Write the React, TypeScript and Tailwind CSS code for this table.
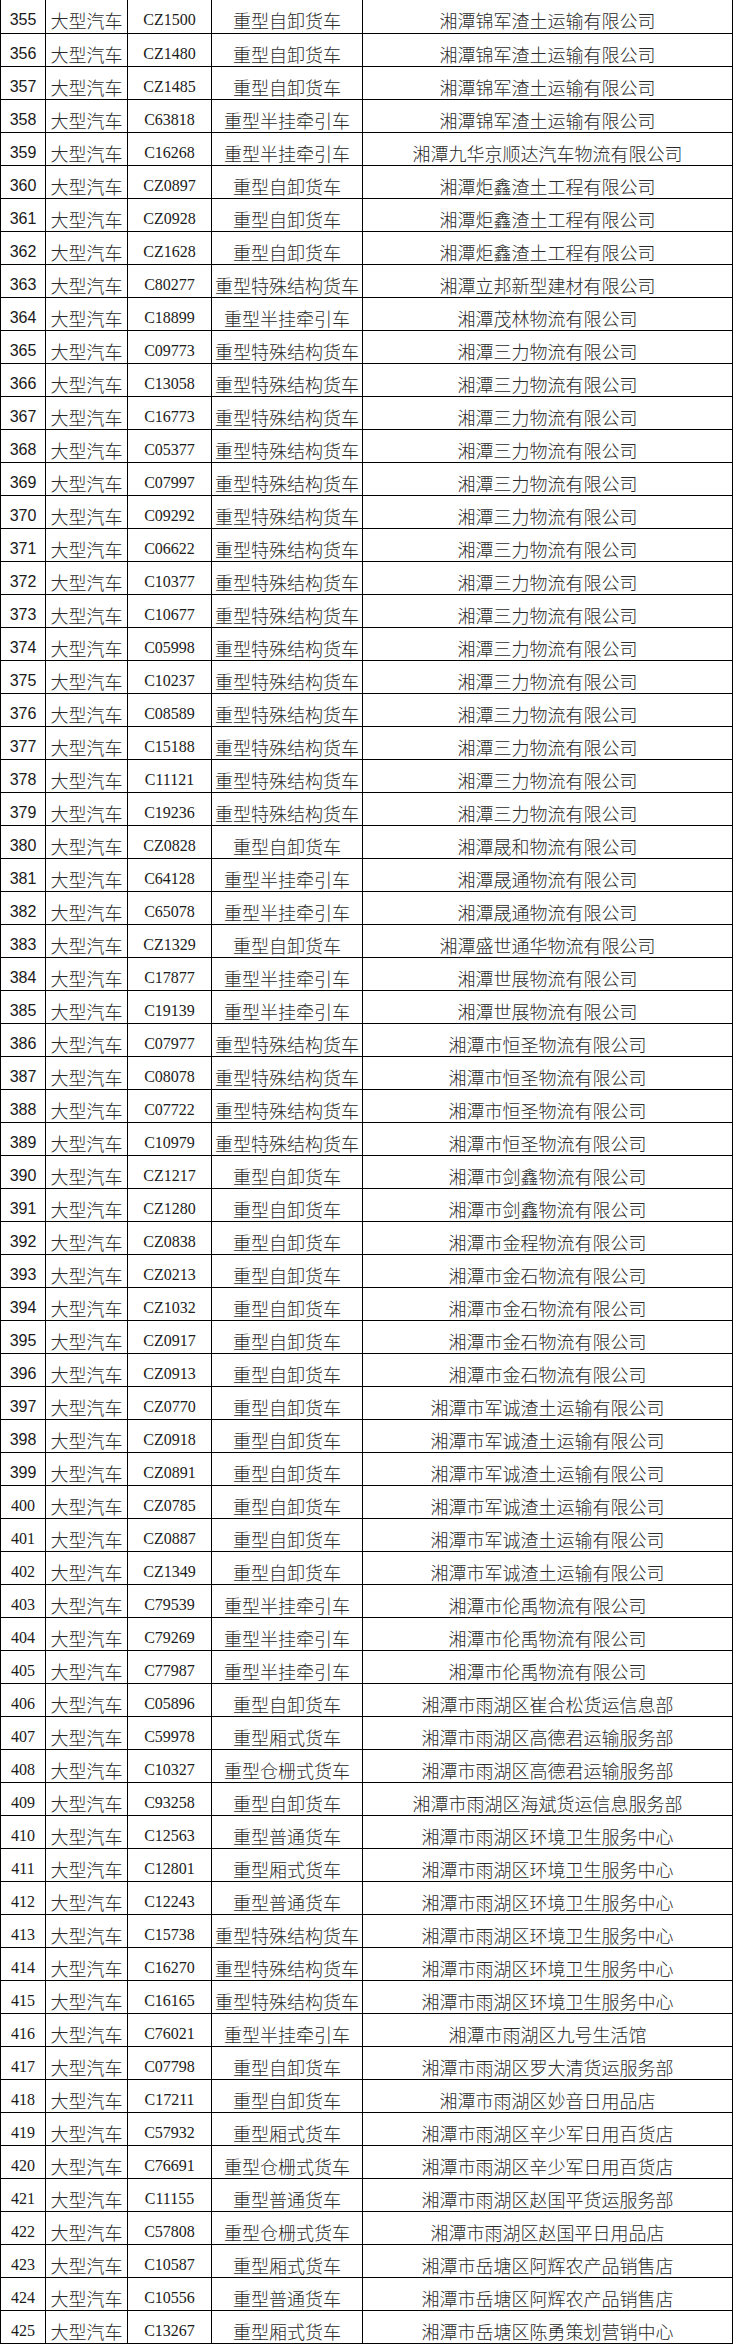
import React from "react";

type Row = [number, string, string, string];

const rows: Row[] = [
  [355, "CZ1500", "重型自卸货车", "湘潭锦军渣土运输有限公司"],
  [356, "CZ1480", "重型自卸货车", "湘潭锦军渣土运输有限公司"],
  [357, "CZ1485", "重型自卸货车", "湘潭锦军渣土运输有限公司"],
  [358, "C63818", "重型半挂牵引车", "湘潭锦军渣土运输有限公司"],
  [359, "C16268", "重型半挂牵引车", "湘潭九华京顺达汽车物流有限公司"],
  [360, "CZ0897", "重型自卸货车", "湘潭炬鑫渣土工程有限公司"],
  [361, "CZ0928", "重型自卸货车", "湘潭炬鑫渣土工程有限公司"],
  [362, "CZ1628", "重型自卸货车", "湘潭炬鑫渣土工程有限公司"],
  [363, "C80277", "重型特殊结构货车", "湘潭立邦新型建材有限公司"],
  [364, "C18899", "重型半挂牵引车", "湘潭茂林物流有限公司"],
  [365, "C09773", "重型特殊结构货车", "湘潭三力物流有限公司"],
  [366, "C13058", "重型特殊结构货车", "湘潭三力物流有限公司"],
  [367, "C16773", "重型特殊结构货车", "湘潭三力物流有限公司"],
  [368, "C05377", "重型特殊结构货车", "湘潭三力物流有限公司"],
  [369, "C07997", "重型特殊结构货车", "湘潭三力物流有限公司"],
  [370, "C09292", "重型特殊结构货车", "湘潭三力物流有限公司"],
  [371, "C06622", "重型特殊结构货车", "湘潭三力物流有限公司"],
  [372, "C10377", "重型特殊结构货车", "湘潭三力物流有限公司"],
  [373, "C10677", "重型特殊结构货车", "湘潭三力物流有限公司"],
  [374, "C05998", "重型特殊结构货车", "湘潭三力物流有限公司"],
  [375, "C10237", "重型特殊结构货车", "湘潭三力物流有限公司"],
  [376, "C08589", "重型特殊结构货车", "湘潭三力物流有限公司"],
  [377, "C15188", "重型特殊结构货车", "湘潭三力物流有限公司"],
  [378, "C11121", "重型特殊结构货车", "湘潭三力物流有限公司"],
  [379, "C19236", "重型特殊结构货车", "湘潭三力物流有限公司"],
  [380, "CZ0828", "重型自卸货车", "湘潭晟和物流有限公司"],
  [381, "C64128", "重型半挂牵引车", "湘潭晟通物流有限公司"],
  [382, "C65078", "重型半挂牵引车", "湘潭晟通物流有限公司"],
  [383, "CZ1329", "重型自卸货车", "湘潭盛世通华物流有限公司"],
  [384, "C17877", "重型半挂牵引车", "湘潭世展物流有限公司"],
  [385, "C19139", "重型半挂牵引车", "湘潭世展物流有限公司"],
  [386, "C07977", "重型特殊结构货车", "湘潭市恒圣物流有限公司"],
  [387, "C08078", "重型特殊结构货车", "湘潭市恒圣物流有限公司"],
  [388, "C07722", "重型特殊结构货车", "湘潭市恒圣物流有限公司"],
  [389, "C10979", "重型特殊结构货车", "湘潭市恒圣物流有限公司"],
  [390, "CZ1217", "重型自卸货车", "湘潭市剑鑫物流有限公司"],
  [391, "CZ1280", "重型自卸货车", "湘潭市剑鑫物流有限公司"],
  [392, "CZ0838", "重型自卸货车", "湘潭市金程物流有限公司"],
  [393, "CZ0213", "重型自卸货车", "湘潭市金石物流有限公司"],
  [394, "CZ1032", "重型自卸货车", "湘潭市金石物流有限公司"],
  [395, "CZ0917", "重型自卸货车", "湘潭市金石物流有限公司"],
  [396, "CZ0913", "重型自卸货车", "湘潭市金石物流有限公司"],
  [397, "CZ0770", "重型自卸货车", "湘潭市军诚渣土运输有限公司"],
  [398, "CZ0918", "重型自卸货车", "湘潭市军诚渣土运输有限公司"],
  [399, "CZ0891", "重型自卸货车", "湘潭市军诚渣土运输有限公司"],
  [400, "CZ0785", "重型自卸货车", "湘潭市军诚渣土运输有限公司"],
  [401, "CZ0887", "重型自卸货车", "湘潭市军诚渣土运输有限公司"],
  [402, "CZ1349", "重型自卸货车", "湘潭市军诚渣土运输有限公司"],
  [403, "C79539", "重型半挂牵引车", "湘潭市伦禹物流有限公司"],
  [404, "C79269", "重型半挂牵引车", "湘潭市伦禹物流有限公司"],
  [405, "C77987", "重型半挂牵引车", "湘潭市伦禹物流有限公司"],
  [406, "C05896", "重型自卸货车", "湘潭市雨湖区崔合松货运信息部"],
  [407, "C59978", "重型厢式货车", "湘潭市雨湖区高德君运输服务部"],
  [408, "C10327", "重型仓栅式货车", "湘潭市雨湖区高德君运输服务部"],
  [409, "C93258", "重型自卸货车", "湘潭市雨湖区海斌货运信息服务部"],
  [410, "C12563", "重型普通货车", "湘潭市雨湖区环境卫生服务中心"],
  [411, "C12801", "重型厢式货车", "湘潭市雨湖区环境卫生服务中心"],
  [412, "C12243", "重型普通货车", "湘潭市雨湖区环境卫生服务中心"],
  [413, "C15738", "重型特殊结构货车", "湘潭市雨湖区环境卫生服务中心"],
  [414, "C16270", "重型特殊结构货车", "湘潭市雨湖区环境卫生服务中心"],
  [415, "C16165", "重型特殊结构货车", "湘潭市雨湖区环境卫生服务中心"],
  [416, "C76021", "重型半挂牵引车", "湘潭市雨湖区九号生活馆"],
  [417, "C07798", "重型自卸货车", "湘潭市雨湖区罗大清货运服务部"],
  [418, "C17211", "重型自卸货车", "湘潭市雨湖区妙音日用品店"],
  [419, "C57932", "重型厢式货车", "湘潭市雨湖区辛少军日用百货店"],
  [420, "C76691", "重型仓栅式货车", "湘潭市雨湖区辛少军日用百货店"],
  [421, "C11155", "重型普通货车", "湘潭市雨湖区赵国平货运服务部"],
  [422, "C57808", "重型仓栅式货车", "湘潭市雨湖区赵国平日用品店"],
  [423, "C10587", "重型厢式货车", "湘潭市岳塘区阿辉农产品销售店"],
  [424, "C10556", "重型普通货车", "湘潭市岳塘区阿辉农产品销售店"],
  [425, "C13267", "重型厢式货车", "湘潭市岳塘区陈勇策划营销中心"],
];

const cjk = "font-['Noto_Sans_CJK_SC',sans-serif] text-[18px] font-light text-[#2a2a2a]";
const cell =
  "flex items-center justify-center pt-[7px] leading-none whitespace-nowrap overflow-hidden border-r border-black";

export default function App() {
  return (
    <div className="w-[733px] bg-white text-[#1a1a1a]">
      {rows.map(([no, code, type, company], i) => (
        <div
          key={no}
          className={`flex border-l border-b border-black ${i === 0 ? "h-[34px]" : "h-[33px]"}`}
        >
          <div
            className={`${cell} w-[45px] text-[16px] ${
              no < 400
                ? "font-['Liberation_Sans',Arial,sans-serif]"
                : "font-['Liberation_Serif',serif]"
            }`}
          >
            {no}
          </div>
          <div className={`${cell} w-[82px] ${cjk}`}>大型汽车</div>
          <div className={`${cell} w-[84px] text-[16px] font-['Liberation_Serif',serif]`}>
            {code}
          </div>
          <div className={`${cell} w-[151px] ${cjk}`}>{type}</div>
          <div className={`${cell} w-[370px] ${cjk}`}>{company}</div>
        </div>
      ))}
    </div>
  );
}
